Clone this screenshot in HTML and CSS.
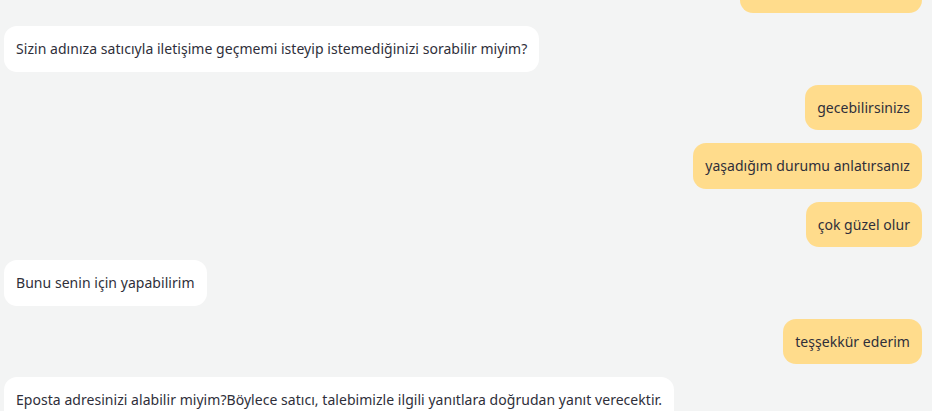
FILE: index.html
```html
<!DOCTYPE html>
<html lang="tr">
<head>
<meta charset="utf-8">
<link rel="stylesheet" href="styles.css">
</head>
<body>
<div class="chat">
  <div class="msg user first"><div class="bubble partial"></div></div>
  <div class="msg bot"><div class="bubble">Sizin adınıza satıcıyla iletişime geçmemi isteyip istemediğinizi sorabilir miyim?</div></div>
  <div class="msg user"><div class="bubble">gecebilirsinizs</div></div>
  <div class="msg user"><div class="bubble">yaşadığım durumu anlatırsanız</div></div>
  <div class="msg user"><div class="bubble">çok güzel olur</div></div>
  <div class="msg bot"><div class="bubble">Bunu senin için yapabilirim</div></div>
  <div class="msg user"><div class="bubble">teşşekkür ederim</div></div>
  <div class="msg bot"><div class="bubble">Eposta adresinizi alabilir miyim?Böylece satıcı, talebimizle ilgili yanıtlara doğrudan yanıt verecektir.</div></div>
</div>
</body>
</html>
```
FILE: styles.css
```css
html, body {
  margin: 0;
  padding: 0;
  background: #f3f4f4;
  height: 100%;
  overflow: hidden;
}
.chat {
  display: flex;
  flex-direction: column;
  gap: 13px;
  padding: 0 10px 0 4px;
  font-family: "Noto Sans", sans-serif;
  font-size: 14px;
  letter-spacing: 0.04px;
  color: #2f2f3a;
}
.msg {
  display: flex;
}
.msg.first {
  margin-top: -32.5px;
}
.msg.user {
  justify-content: flex-end;
}
.msg.bot {
  justify-content: flex-start;
}
.bubble {
  padding: 12px 12px;
  line-height: 21.5px;
  border-radius: 13px;
  white-space: nowrap;
}
.bubble.partial {
  width: 158px;
  height: 21.5px;
}
.user .bubble {
  background: #ffdc8c;
}
.bot .bubble {
  background: #ffffff;
}
```
